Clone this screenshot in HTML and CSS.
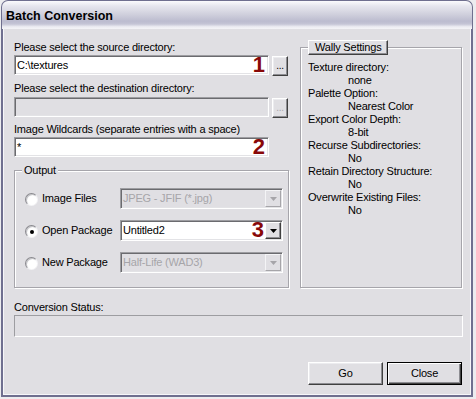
FILE: index.html
```html
<!DOCTYPE html>
<html lang="en">

<head>
    <meta charset="UTF-8" />
    <title>Batch Conversion</title>
    <link rel="stylesheet" href="styles.css">
</head>

<body>

    <div class="window">
        <div class="titlebar">Batch Conversion</div>

        <div class="client">
            <div class="top">

                <!-- paths and output -->
                <div class="paths">
                    <div class="label first">Please select the source directory:</div>
                    <div class="field-row">
                        <div class="textbox"><span class="text">C:\textures</span><span class="mark">1</span></div>
                        <button class="btn browse">...</button>
                    </div>

                    <div class="label second">Please select the destination directory:</div>
                    <div class="field-row">
                        <div class="textbox disabled"></div>
                        <button class="btn browse disabled">...</button>
                    </div>

                    <div class="label third">Image Wildcards (separate entries with a space)</div>
                    <div class="textbox"><span class="text">*</span><span class="mark">2</span></div>

                    <fieldset class="group output">
                        <legend>Output</legend>
                        <div class="option">
                            <span class="radio"></span>
                            <span class="option-label">Image Files</span>
                            <div class="combo disabled">
                                <span class="text">JPEG - JFIF (*.jpg)</span>
                                <span class="drop"><svg width="7" height="4" viewBox="0 0 7 4"><polygon points="0,0 7,0 3.5,4" /></svg></span>
                            </div>
                        </div>
                        <div class="option">
                            <span class="radio checked"></span>
                            <span class="option-label">Open Package</span>
                            <div class="combo">
                                <span class="text">Untitled2</span>
                                <span class="mark">3</span>
                                <span class="drop"><svg width="7" height="4" viewBox="0 0 7 4"><polygon points="0,0 7,0 3.5,4" /></svg></span>
                            </div>
                        </div>
                        <div class="option">
                            <span class="radio"></span>
                            <span class="option-label">New Package</span>
                            <div class="combo disabled">
                                <span class="text">Half-Life (WAD3)</span>
                                <span class="drop"><svg width="7" height="4" viewBox="0 0 7 4"><polygon points="0,0 7,0 3.5,4" /></svg></span>
                            </div>
                        </div>
                    </fieldset>
                </div>

                <!-- settings summary -->
                <fieldset class="group wally">
                    <legend>Wally Settings</legend>
                    <div class="setting">Texture directory:</div>
                    <div class="value">none</div>
                    <div class="setting">Palette Option:</div>
                    <div class="value">Nearest Color</div>
                    <div class="setting">Export Color Depth:</div>
                    <div class="value">8-bit</div>
                    <div class="setting">Recurse Subdirectories:</div>
                    <div class="value">No</div>
                    <div class="setting">Retain Directory Structure:</div>
                    <div class="value">No</div>
                    <div class="setting">Overwrite Existing Files:</div>
                    <div class="value">No</div>
                </fieldset>
            </div>

            <div class="label status-label">Conversion Status:</div>
            <div class="status"></div>

            <div class="actions">
                <button class="btn push">Go</button>
                <button class="btn push default">Close</button>
            </div>
        </div>
    </div>

</body>

</html>
```

FILE: styles.css
```css
body {
    margin: 0;
    background: #ececef;
    font-family: 'Liberation Sans', Arial, sans-serif;
    font-size: 11px;
    letter-spacing: -0.2px;
    color: #000;
}

.window {
    width: 472px;
    height: 397px;
    margin-left: 1px;
    display: flex;
    flex-direction: column;
}

.titlebar {
    height: 29px;
    box-sizing: border-box;
    border: 1px solid #6f6f8f;
    border-bottom: 0;
    border-radius: 7px 7px 0 0;
    padding: 8px 0 0 4px;
    font-weight: bold;
    font-size: 12.5px;
    line-height: 14px;
    letter-spacing: 0;
    background: linear-gradient(to bottom, #fbfbfd 0%, #e6e6ee 18%, #d2d2de 45%, #bcbccf 72%, #c4c4d5 82%, #ececf2 92%, #f4f4f7 100%);
}

.client {
    flex: 1;
    background: #e0dfe3;
    border: 2px solid #6f6f8f;
    border-top: 0;
    box-shadow: inset 1px 0 #f6f6f9, inset -1px 0 #f6f6f9, inset 0 -1px #f6f6f9;
    padding: 11px 8px 0 11px;
    display: flex;
    flex-direction: column;
}

.top {
    display: flex;
    gap: 11px;
}

.paths {
    width: 275px;
    display: flex;
    flex-direction: column;
}

.label {
    line-height: 13px;
    white-space: nowrap;
}

.label.first {
    margin-top: 1px;
    margin-bottom: 1px;
}

.label.second {
    margin-top: 6px;
    margin-bottom: 2px;
}

.label.third {
    margin-top: 5px;
    margin-bottom: 1px;
}

.field-row {
    display: flex;
    align-items: flex-start;
    gap: 3px;
}

/* sunken edit box */
.textbox {
    width: 255px;
    height: 20px;
    box-sizing: border-box;
    background: #fff;
    border: 1px solid;
    border-color: #9d9da1 #fff #fff #9d9da1;
    box-shadow: inset 1px 1px #6b6b6f, inset -1px -1px #e3e3e6;
    padding: 1px 3px 1px 2px;
    display: flex;
    align-items: flex-start;
}

.textbox.disabled {
    background: #e0dfe3;
}

.text {
    line-height: 16px;
    white-space: nowrap;
}

.mark {
    margin-left: auto;
    font-weight: bold;
    font-size: 22px;
    line-height: 16px;
    letter-spacing: 0;
    color: #880808;
}

/* raised button */
.btn {
    margin: 0;
    padding: 0;
    font-family: inherit;
    font-size: 11px;
    letter-spacing: -0.2px;
    color: #000;
    background: #e0dfe3;
    border: 1px solid;
    border-color: #fff #404040 #404040 #fff;
    box-shadow: inset -1px -1px #8d8d92, inset 1px 1px #ececef;
    box-sizing: border-box;
}

.btn.browse {
    width: 16px;
    height: 20px;
    margin-top: 1px;
    line-height: 14px;
    font-size: 10px;
}

.btn.disabled {
    color: #a6a5a9;
}

.group {
    margin: 0;
    padding: 0;
    min-width: 0;
    border: 1px solid #a6a5ab;
    box-shadow: inset 1px 1px #fff, 1px 1px #fff;
}

.output {
    margin-top: 7px;
    padding: 11px 5px 14px 10px;
    display: flex;
    flex-direction: column;
    gap: 11px;
}

.output legend {
    margin-left: -3px;
    padding: 0 2px;
    line-height: 13px;
    background: #e0dfe3;
}

.option {
    display: flex;
    align-items: center;
    height: 21px;
}

.radio {
    width: 13px;
    height: 13px;
    box-sizing: border-box;
    margin-top: 2px;
    margin-right: 4px;
    border-radius: 50%;
    border: 1px solid;
    border-color: #8a8a8f #f4f4f6 #f4f4f6 #8a8a8f;
    background: radial-gradient(circle at 60% 60%, #fff 45%, #e4e4e8 100%);
    box-shadow: inset 1px 1px #c4c4c8;
    display: flex;
    align-items: center;
    justify-content: center;
}

.radio.checked::after {
    content: '';
    width: 4px;
    height: 4px;
    border-radius: 50%;
    background: #000;
}

.option-label {
    flex: 1;
    line-height: 13px;
}

.combo {
    width: 163px;
    height: 21px;
    box-sizing: border-box;
    background: #fff;
    border: 1px solid;
    border-color: #9d9da1 #fff #fff #9d9da1;
    box-shadow: inset 1px 1px #6b6b6f, inset -1px -1px #e3e3e6;
    padding: 1px 1px 1px 2px;
    display: flex;
    align-items: flex-start;
}

.combo.disabled {
    background: #e0dfe3;
    color: #a6a5a9;
}

.combo .mark {
    margin-right: 1px;
}

.drop {
    width: 16px;
    height: 17px;
    margin-left: auto;
    box-sizing: border-box;
    background: #e0dfe3;
    border: 1px solid;
    border-color: #fff #404040 #404040 #fff;
    box-shadow: inset -1px -1px #8d8d92;
    display: flex;
    align-items: center;
    justify-content: center;
}

.combo .mark + .drop {
    margin-left: 0;
}

.drop svg {
    fill: #000;
}

.combo.disabled .drop {
    border-color: #f4f4f6 #a6a5a9 #a6a5a9 #f4f4f6;
    box-shadow: none;
}

.combo.disabled .drop svg {
    fill: #a6a5a9;
}

.wally {
    width: 162px;
    box-sizing: border-box;
    padding: 6px 4px 0 7px;
}

.wally legend {
    margin-left: 0;
    padding: 0 6px;
    line-height: 13px;
    background: #e0dfe3;
    border: 1px solid;
    border-color: #fff #404040 #404040 #fff;
    box-shadow: inset -1px -1px #8d8d92;
}

.setting,
.value {
    line-height: 13px;
    white-space: nowrap;
}

.value {
    padding-left: 40px;
}

.status-label {
    margin-top: 13px;
    margin-bottom: 1px;
}

.status {
    height: 22px;
    box-sizing: border-box;
    border: 1px solid;
    border-color: #9d9da1 #fff #fff #9d9da1;
}

.actions {
    margin-top: 25px;
    padding-right: 1px;
    display: flex;
    justify-content: flex-end;
    gap: 4px;
}

.btn.push {
    width: 75px;
    height: 23px;
    line-height: 19px;
}

.btn.default {
    border: 1px solid #000;
    box-shadow: inset 1px 1px #fff, inset -1px -1px #404040, inset -2px -2px #8d8d92;
}
```
